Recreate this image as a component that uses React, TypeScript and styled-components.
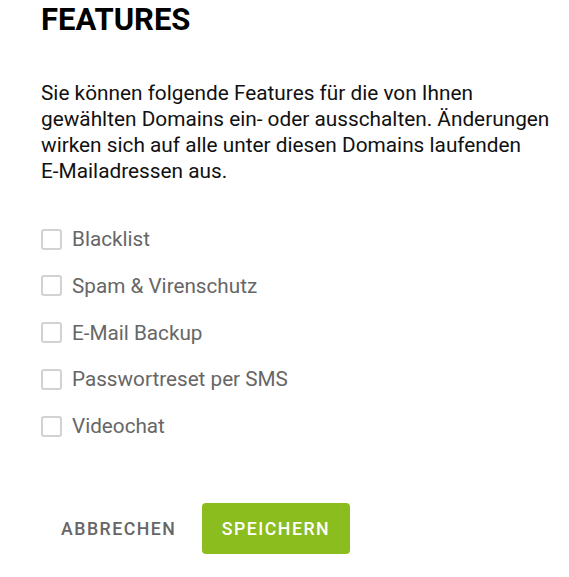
import React from "react";
import styled, { createGlobalStyle } from "styled-components";

const Global = createGlobalStyle`
  html, body { margin: 0; padding: 0; background: #fff; }
  body { font-family: Roboto, "Noto Sans", Arial, sans-serif; }
`;

const Page = styled.div`
  padding: 2px 10px 0 41px;
  display: flex;
  flex-direction: column;
`;

const Title = styled.h1`
  margin: 0;
  font-size: 31px;
  line-height: 36px;
  font-weight: 700;
  color: #000;
`;

const Intro = styled.p`
  margin: 42px 0 0;
  font-size: 20.8px;
  line-height: 26px;
  color: #111;
`;

const List = styled.div`
  display: flex;
  flex-direction: column;
  gap: 22.75px;
  margin-top: 43px;
`;

const Row = styled.label`
  display: flex;
  align-items: center;
  gap: 10px;
  height: 24px;
  cursor: pointer;
`;

const Box = styled.span`
  width: 17px;
  height: 17px;
  border: 2px solid #d2d2d2;
  border-radius: 3px;
  box-sizing: content-box;
  flex: none;
`;

const Label = styled.span`
  font-size: 20.7px;
  color: #666;
`;

const Actions = styled.div`
  display: flex;
  align-items: center;
  gap: 26px;
  margin-top: 65px;
  margin-left: 20px;
`;

const Button = styled.button<{ $primary?: boolean }>`
  font-family: Roboto, Arial, sans-serif;
  font-size: 17.7px;
  font-weight: 500;
  letter-spacing: 1.5px;
  text-transform: uppercase;
  border: none;
  border-radius: 4px;
  height: 51px;
  padding: ${(p) => (p.$primary ? "0 19.5px" : "0")};
  background: ${(p) => (p.$primary ? "#8bbd1f" : "transparent")};
  color: ${(p) => (p.$primary ? "#fff" : "#666")};
  cursor: pointer;
`;

const features = [
  "Blacklist",
  "Spam & Virenschutz",
  "E-Mail Backup",
  "Passwortreset per SMS",
  "Videochat",
];

export default function App() {
  return (
    <>
      <Global />
      <Page>
        <Title>FEATURES</Title>
        <Intro>
          Sie können folgende Features für die von Ihnen
          <br />
          gewählten Domains ein- oder ausschalten. Änderungen
          <br />
          wirken sich auf alle unter diesen Domains laufenden
          <br />
          E-Mailadressen aus.
        </Intro>
        <List>
          {features.map((f) => (
            <Row key={f}>
              <Box />
              <Label>{f}</Label>
            </Row>
          ))}
        </List>
        <Actions>
          <Button>Abbrechen</Button>
          <Button $primary>Speichern</Button>
        </Actions>
      </Page>
    </>
  );
}
